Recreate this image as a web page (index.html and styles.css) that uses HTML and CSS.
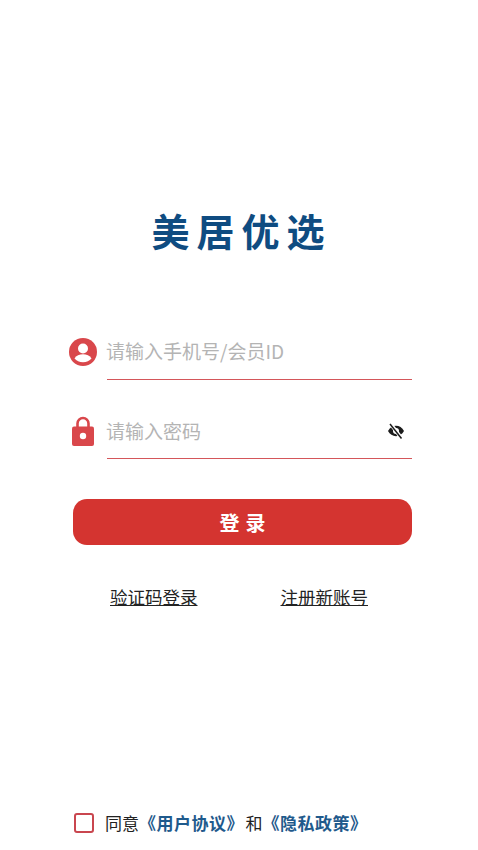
FILE: index.html
```html
<!DOCTYPE html>
<html lang="zh-CN">

<head>
    <meta charset="UTF-8">
    <title>美居优选 - 登录</title>
    <link rel="stylesheet" href="styles.css">
</head>

<body>

<div class="page">
    <h1 class="title">美居优选</h1>

    <div class="field field-user">
        <svg class="field-icon" width="28" height="28" viewBox="0 0 28 28">
            <circle cx="14" cy="14" r="14" fill="#d9474b"/>
            <circle cx="14" cy="10.500" r="5" fill="#fff"/>
            <path d="M5.500 20.500c1.600-3 5-4.200 8.500-4.200s6.900 1.200 8.500 4.200c-1.900 2.300-5 3.700-8.500 3.700s-6.600-1.400-8.500-3.700z" fill="#fff"/>
        </svg>
        <div class="field-line">
            <span class="placeholder">请输入手机号/会员ID</span>
        </div>
    </div>

    <div class="field field-pass">
        <svg class="field-icon" width="22" height="30" viewBox="0 0 22 30">
            <path d="M5.500 13V7.500a5.500 5.500 0 0 1 11 0V13" fill="none" stroke="#d9474b" stroke-width="2.600"/>
            <rect x="0" y="10.500" width="22" height="19.500" rx="2" fill="#d9474b"/>
            <circle cx="11" cy="20" r="3.200" fill="#fff"/>
        </svg>
        <div class="field-line">
            <span class="placeholder">请输入密码</span>
            <svg class="eye" width="18" height="16" viewBox="0 0 18 16">
                <path d="M1 8c1.800-3.400 4.700-5.200 8-5.200s6.200 1.800 8 5.200c-1.800 3.400-4.700 5.200-8 5.200S2.800 11.400 1 8z" fill="#1c1c1c"/>
                <circle cx="9" cy="8" r="3" fill="#fff"/>
                <path d="M3.500 0.800l11 14.400" stroke="#fff" stroke-width="3.600"/>
                <path d="M3 1l11.500 14.500" stroke="#1c1c1c" stroke-width="1.500"/>
            </svg>
        </div>
    </div>

    <button class="login-btn">登录</button>

    <div class="links">
        <a class="link">验证码登录</a>
        <a class="link">注册新账号</a>
    </div>

    <div class="agree">
        <span class="checkbox"></span>
        <span class="agree-text">同意<b>《用户协议》</b>和<b>《隐私政策》</b></span>
    </div>
</div>

</body>
</html>
```

FILE: styles.css
```css
body {
    margin: 0;
    background-color: #fff;
    font-family: "Noto Sans CJK SC", "Liberation Sans", sans-serif;
}

.page {
    box-sizing: border-box;
    width: 478px;
    height: 850px;
    padding: 202px 66px 0 69px;
    display: flex;
    flex-direction: column;
    overflow: hidden;
}

.title {
    margin: 0 0 0 2px;
    height: 56px;
    line-height: 56px;
    text-align: center;
    font-size: 38px;
    font-weight: 700;
    letter-spacing: 7px;
    color: #0f4c81;
}

.field {
    display: flex;
    align-items: center;
    gap: 10px;
    height: 56px;
}

.field-user {
    margin-top: 66px;
}

.field-pass {
    margin-top: 23px;
    gap: 13px;
    padding-left: 3px;
}

.field-icon {
    flex: none;
    margin-bottom: 1px;
}

.field-line {
    flex: 1;
    height: 56px;
    box-sizing: border-box;
    display: flex;
    align-items: center;
    justify-content: space-between;
    padding: 0 7px 2px 0;
    border-bottom: 1.5px solid #d4565a;
}

.field-pass .field-line {
    padding-top: 2px;
}

.placeholder {
    font-size: 19px;
    margin-left: -1px;
    color: #b4b4b4;
}

.login-btn {
    display: block;
    height: 46px;
    margin: 40px 0 0 4px;
    border: none;
    border-radius: 14px;
    background-color: #d43430;
    color: #fff;
    font-family: inherit;
    font-size: 20px;
    font-weight: 700;
    letter-spacing: 6px;
    padding: 1px 0 0 6px;
}

.links {
    display: flex;
    justify-content: space-between;
    margin-top: 39px;
    padding: 0 44px 0 41px;
}

.link {
    font-size: 17.500px;
    line-height: 26px;
    color: #222;
    text-decoration: underline;
}

.agree {
    display: flex;
    align-items: center;
    gap: 11px;
    margin-top: auto;
    margin-bottom: 17px;
    padding-left: 5px;
}

.checkbox {
    box-sizing: border-box;
    width: 20px;
    height: 20px;
    border: 2px solid #c9464f;
    border-radius: 3px;
}

.agree-text {
    font-size: 17px;
    line-height: 20px;
    color: #222;
}

.agree-text b {
    font-weight: 700;
    letter-spacing: 0.500px;
    margin-right: 1.500px;
    color: #1f5a8c;
}
```
